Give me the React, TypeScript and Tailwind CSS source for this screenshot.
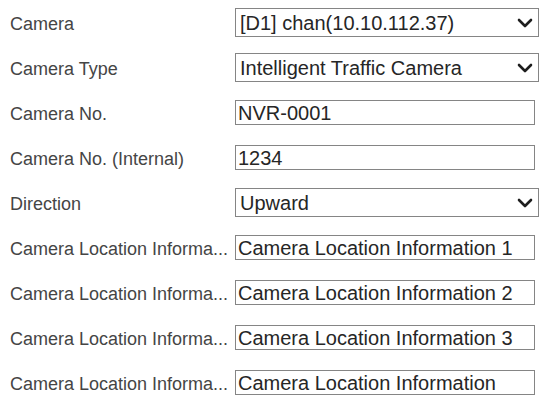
type Field = {
    label: string;
    value: string;
    kind: "select" | "input";
};

// labels are shown as the device UI abbreviates them
const fields: Field[] = [
    { label: "Camera", value: "[D1] chan(10.10.112.37)", kind: "select" },
    { label: "Camera Type", value: "Intelligent Traffic Camera", kind: "select" },
    { label: "Camera No.", value: "NVR-0001", kind: "input" },
    { label: "Camera No. (Internal)", value: "1234", kind: "input" },
    { label: "Direction", value: "Upward", kind: "select" },
    { label: "Camera Location Informa...", value: "Camera Location Information 1", kind: "input" },
    { label: "Camera Location Informa...", value: "Camera Location Information 2", kind: "input" },
    { label: "Camera Location Informa...", value: "Camera Location Information 3", kind: "input" },
    { label: "Camera Location Informa...", value: "Camera Location Information", kind: "input" },
];

function Chevron() {
    return (
        <svg width="16" height="10" viewBox="0 0 16 10" className="shrink-0">
            <path d="M2 2 L8 8 L14 2" fill="none" stroke="#1e1e1e" strokeWidth="2.6" strokeLinecap="round" strokeLinejoin="round" />
        </svg>
    );
}

export default function App() {
    return (
        <div className="w-[542px] h-[401px] overflow-hidden bg-white font-['Liberation_Sans',Arial,sans-serif]">
            {fields.map((f, i) => (
                <div key={i} className="flex h-[45px] items-center">
                    <div className="w-[233px] whitespace-nowrap pl-[10px] pt-[2px] text-[18px] leading-[22px] text-[#454545]">
                        {f.label}
                    </div>
                    {f.kind === "select" ? (
                        <div className="ml-[2px] flex h-[29px] w-[304px] items-center justify-between border border-[#858585] pl-[4px] pr-[5px]">
                            <span className="text-[20px] leading-[24px] text-[#262626]">{f.value}</span>
                            <Chevron />
                        </div>
                    ) : (
                        <div className="ml-[2px] flex h-[25px] w-[300px] items-center border border-[#858585] pl-[2px]">
                            <span className="text-[20px] leading-[24px] text-[#262626]">{f.value}</span>
                        </div>
                    )}
                </div>
            ))}
        </div>
    );
}
